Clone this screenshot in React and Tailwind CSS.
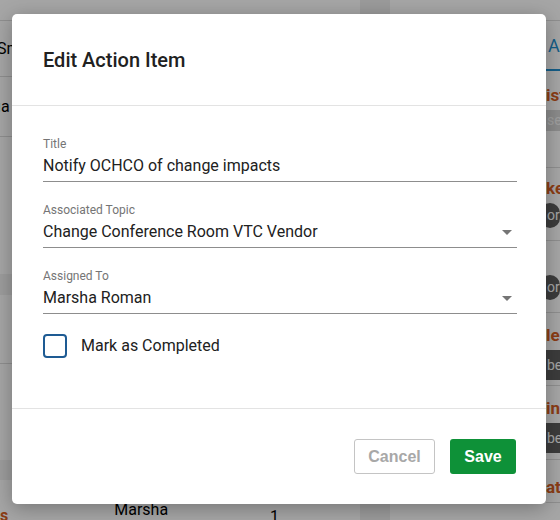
import React from "react";

const Field = ({ label, value, select }) => (
  <div className="flex flex-col">
    <label className="text-[12px] leading-[16px] text-[#757575]">{label}</label>
    <div className="mt-[2px] flex items-center justify-between border-b border-[#8d8d8d] pb-[3px]">
      <span className="text-[16px] leading-[24px] text-[#212121]">{value}</span>
      {select && (
        <svg width="10" height="5" viewBox="0 0 10 5" className="mr-[5px]">
          <path d="M0 0 L10 0 L5 5 Z" fill="#757575" />
        </svg>
      )}
    </div>
  </div>
);

const RightItem = ({ title, tag, pill, h }) => (
  <div className={`flex flex-col border-b border-[#dcdcdc] ${h}`}>
    <div className="h-[22px] mt-[11px] whitespace-nowrap text-[17px] font-bold leading-[22px] text-[#d65e1f]">
      {title}
    </div>
    {tag && (
      <div
        className={`mt-[4px] ml-[-6px] whitespace-nowrap px-[7px] text-[14px] ${
          pill === "round"
            ? "h-[25px] leading-[25px] rounded-full bg-[#5c5c5c] text-white"
            : pill === "light"
            ? "h-[21px] leading-[21px] bg-[#d6d6d6] text-[#f5f5f5]"
            : "h-[30px] leading-[30px] bg-[#5c5c5c] text-white"
        }`}
      >
        {tag}
      </div>
    )}
  </div>
);

export default function App() {
  return (
    <div className="relative h-[520px] w-[560px] overflow-hidden bg-white font-['Roboto',sans-serif]">
      {/* page behind the dialog */}
      <div className="flex h-full">
        <div className="flex w-[360px] shrink-0 flex-col bg-white">
          <div className="h-[21px] border-b border-[#dcdcdc]" />
          <div className="flex h-[56px] items-center border-b border-[#dcdcdc] text-[16px] text-black">
            <span className="ml-[-3px]">Smith</span>
          </div>
          <div className="flex h-[60px] items-center border-b border-[#dcdcdc] text-[16px] text-black">
            <span className="ml-[-3px]">ıa</span>
          </div>
          <div className="h-[137px]" />
          <div className="h-[21px] bg-[#f2f2f2]" />
          <div className="h-[69px] border-b border-[#dcdcdc]" />
          <div className="h-[96px]" />
          <div className="h-[20px] bg-[#f2f2f2]" />
          <div className="flex h-[40px] text-[16px] leading-[20px]">
            <span className="mt-[26px] font-bold text-[#d65e1f]">s</span>
            <span className="ml-[106px] mt-[20px] text-black">Marsha</span>
            <span className="ml-[102px] mt-[27px] text-black">1</span>
          </div>
        </div>
        <div className="w-[30px] shrink-0 bg-[#eeeeee]" />
        <div className="flex min-w-0 flex-1 flex-col overflow-hidden bg-white">
          <div className="h-[21px] shrink-0 border-b border-[#dcdcdc]" />
          <div className="flex h-[50px] shrink-0 flex-col pl-[156px]">
            <div className="flex h-[48px] items-center pl-[2px] text-[18px] text-[#1f8fcf]">Action</div>
            <div className="h-[2px] bg-[#1f8fcf]" />
          </div>
          <div className="flex flex-col pl-[156px]">
            <RightItem title="istory" tag="server" pill="light" h="h-[97px] pt-[2px]" />
            <RightItem title="ker" tag="or Vendor" pill="round" h="h-[75px] -mt-[2px]" />
            <div className="h-[72px] border-b border-[#dcdcdc] pt-[34px]">
              <div className="ml-[-6px] h-[25px] whitespace-nowrap rounded-full bg-[#5c5c5c] px-[7px] text-[14px] leading-[25px] text-white">
                or Vendor
              </div>
            </div>
            <RightItem title="lendar" tag="bers" pill="rect" h="h-[73px]" />
            <RightItem title="ing" tag="bers" pill="rect" h="h-[74px]" />
            <RightItem title="ates" h="h-[43px] pt-[5px]" />
          </div>
        </div>
      </div>

      {/* dialog */}
      <div className="absolute inset-0 bg-black/35">
        <div className="ml-[12px] mt-[14px] flex h-[490px] w-[534px] flex-col rounded-[5px] bg-white shadow-[0_4px_20px_rgba(0,0,0,0.3)]">
          <div className="flex h-[92px] items-center border-b border-[#e3e3e3] px-[31px]">
            <h2 className="text-[20px] font-medium text-[#212121]">Edit Action Item</h2>
          </div>
          <div className="flex flex-1 flex-col gap-[20px] px-[31px] pr-[29px] pt-[30px]">
            <Field label="Title" value="Notify OCHCO of change impacts" />
            <Field label="Associated Topic" value="Change Conference Room VTC Vendor" select />
            <Field label="Assigned To" value="Marsha Roman" select />
            <label className="flex items-center gap-[14px]">
              <span className="h-[24px] w-[24px] rounded-[4px] border-2 border-[#1e5b93]" />
              <span className="text-[16px] text-[#212121]">Mark as Completed</span>
            </label>
          </div>
          <div className="flex h-[96px] items-center justify-end gap-[15px] border-t border-[#e3e3e3] pr-[30px]">
            <button className="h-[35px] w-[81px] rounded-[3px] border border-[#c4c4c4] font-['Liberation_Sans',sans-serif] text-[16px] font-bold text-[#a8a8a8]">
              Cancel
            </button>
            <button className="h-[35px] w-[66px] rounded-[3px] bg-[#0e9138] font-['Liberation_Sans',sans-serif] text-[16px] font-bold text-white">
              Save
            </button>
          </div>
        </div>
      </div>
    </div>
  );
}
